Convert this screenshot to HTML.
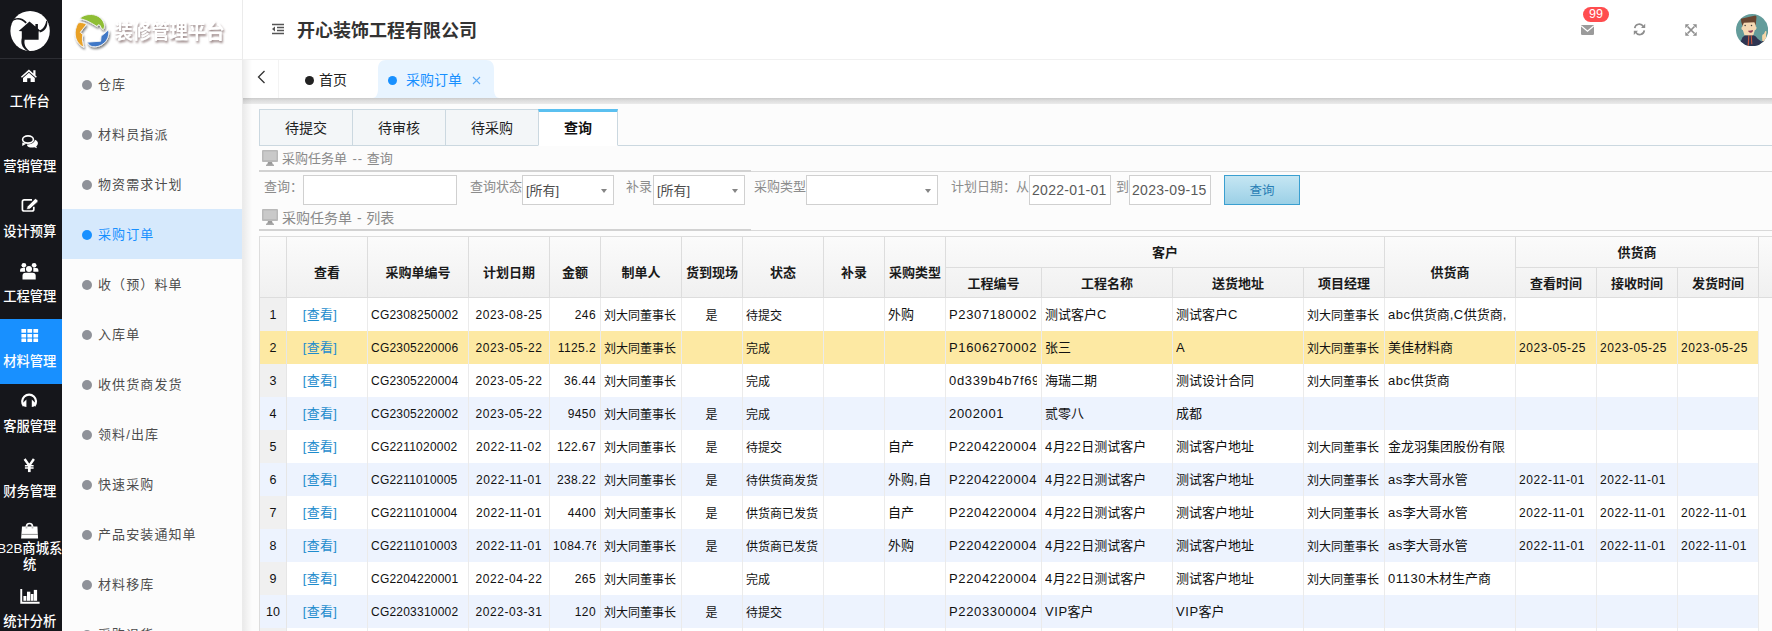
<!DOCTYPE html>
<html lang="zh-CN">
<head>
<meta charset="utf-8">
<title>装修管理平台</title>
<style>
*{box-sizing:border-box;margin:0;padding:0}
html,body{width:1772px;height:631px;overflow:hidden;background:#fff}
body{font-family:"Liberation Sans","Noto Sans CJK SC",sans-serif;font-size:12px;color:#222;position:relative}
.abs{position:absolute}
/* dark rail */
#rail{left:0;top:0;width:62px;height:631px;background:#15161b;color:#fff;overflow:hidden}
#rail .logo{height:59px;border-bottom:1px solid #2c2d33;position:relative}
#rail .it{height:65px;position:relative;text-align:center}
#rail .it.on{background:#1890ff}
#rail .it svg{position:absolute;left:19px;top:7.7px}
#rail .it span{font-weight:500;position:absolute;left:-10px;width:79.5px;top:33px;font-size:13.3px;line-height:20px;white-space:nowrap}
/* second menu */
#menu{left:62px;top:0;width:181px;height:631px;background:#fcfcfc;border-right:1px solid #ebebeb;overflow:hidden}
#menu .brand{height:60px;background:#fff;border-bottom:1px solid #ececec;position:relative}
#menu .mi{height:50px;line-height:52px;padding-left:36px;font-size:13px;letter-spacing:1.1px;color:#4d4d4d;position:relative;white-space:nowrap}
#menu .mi:before{content:"";position:absolute;left:20px;top:20.5px;width:10px;height:10px;border-radius:50%;background:#8f9299}
#menu .mi.on{background:#d6e9fc;color:#1890ff}
#menu .mi.on:before{background:#1890ff}
/* top header */
#top{left:243px;top:0;width:1529px;height:60px;background:#fff;border-bottom:1px solid #f0f0f0}
#top h1{position:absolute;left:54px;top:17.5px;font-size:18px;line-height:26px;font-weight:bold;color:#333;letter-spacing:0}
/* tabbar */
#tabbar{left:243px;top:60px;width:1529px;height:38px;background:#fff}
#tbsh{left:243px;top:98px;width:1529px;height:6px;background:linear-gradient(#cbcbcb,#dcdcdc 40%,#ebebeb)}
#mnsh{left:243px;top:60px;width:9px;height:571px;background:linear-gradient(90deg,rgba(0,0,0,.07),rgba(0,0,0,0))}
#tabbar .t{position:absolute;top:.5px;height:38px;line-height:38px;font-size:14px;color:#222;white-space:nowrap}
#content{left:243px;top:98px;width:1529px;height:533px;background:#fcfcfc}
/* easyui tabs */
#etabs{left:259px;top:109px;width:1513px;height:37px;border-bottom:1px solid #cbd8e0}
#etabs .et{position:absolute;top:0;height:37px;width:94px;border:1px solid #cbd8e0;background:#f3f6f8;text-align:center;line-height:36px;font-size:14px;color:#222}
#etabs .et.on{background:#fff;border-top:3px solid #5bc0f0;border-bottom-color:#fff;font-weight:bold;width:80px;line-height:33px;color:#111}
.sec{left:259px;width:1513px;height:24px;border-bottom:1px solid #d9d9d9;color:#8a8a8a;font-size:13px;line-height:20px;white-space:nowrap}
.sec span{position:absolute;left:23px;top:1px}
.sec:after{content:"";position:absolute;left:0;top:22px;width:492px;height:2px;background:#d2d2d2}
.lbl{color:#8c8c8c;font-size:13px;line-height:18px;white-space:nowrap}
.inp{height:30px;border:1px solid #d0d0d0;background:#fff;font-size:13px;line-height:30px;color:#4a4a4a;padding-left:3px;white-space:nowrap}
.inp i{position:absolute;right:6.5px;top:12.5px;width:0;height:0;border-left:3.5px solid transparent;border-right:3.5px solid transparent;border-top:4px solid #858585}
/* grid */
#grid{left:259px;top:236px;width:1513px;height:395px;overflow:hidden}
#ghead{position:absolute;left:0;top:0;width:1513px;height:62px;border-top:1px solid #ddd;border-bottom:1px solid #ddd;border-left:1px solid #ddd;background:linear-gradient(#fbfbfb,#f0f0f0)}
table{border-collapse:separate;border-spacing:0;table-layout:fixed}
#ht{position:absolute;left:0;top:0;width:1499px}
#ht td{border-right:1px solid #ddd;border-bottom:1px solid #ddd;text-align:center;font-weight:bold;font-size:13px;color:#1a1a1a;height:30px;padding:0;white-space:nowrap;overflow:hidden}
#ht tr.r2 td{height:29px;border-bottom:0}
#ht tr:first-child td{height:31px}
#ht tr:first-child td[rowspan]{border-bottom:0}
#bt{position:absolute;left:1px;top:62px;width:1499px;background:#fff}
#bt td{height:33px;border-right:1px solid #ebebeb;border-bottom:0;padding:0 4px 1px 3px;font-size:12px;white-space:nowrap;overflow:hidden;color:#111}
#bt td div{overflow:hidden;white-space:nowrap}
#bt td.rn{background:#f0f0f0;text-align:center;border-right:1px solid #e6e6e6;padding:0;font-size:12.5px}
#bt tr.alt td{background:#edf3fe}
#bt tr.alt td.rn{background:#edf3fe}
#bt tr.sel td,#bt tr.sel td.rn{background:#fde9a3}
#bt td.lnk{text-align:center;font-size:13px;padding-right:17px}
#bt td.lnk a{color:#1e8ccd;position:relative;top:-1px;letter-spacing:.3px}
#bt td.amt{text-align:right}
#bt td.ctr{text-align:center}
#bt td.big{font-size:13px;padding-bottom:2px}
#bt td.code,#bt td.date,#bt td.amt,#bt td.pc{padding-bottom:0}
#bt td.date{letter-spacing:.55px}
#bt td.code{letter-spacing:.22px}
#bt td.dc{text-align:center;padding:0}
#bt td.big.pc{letter-spacing:.65px}
#bt td i{font-style:normal;letter-spacing:.4px}
#bt td.big i{letter-spacing:.55px}
#bt td.amt{letter-spacing:.4px}
#gleft{position:absolute;left:0;top:62px;width:1px;height:340px;background:#ddd}
</style>
</head>
<body>
<div id="content" class="abs"></div>

<div id="rail" class="abs">
  <div class="logo">
    <svg width="62" height="59" viewBox="0 0 62 59"><ellipse cx="30.100" cy="31" rx="19.700" ry="20" fill="#fff"/>
    <path d="M18.700 30.900 L29.500 21.500 L35.400 26.400 L35.400 24 L37.900 24 L37.900 28.600 L40.200 30.800 L38.600 31.600 L38.600 39.800 L21.800 39.800 L21.800 31.300Z" fill="#15161b"/>
    <path d="M12.300 20 C16 16.800 22.500 17 26.800 22.300 L25.500 23.500 C21.500 18.800 16.500 18.800 12.800 21Z" fill="#15161b"/>
    <path d="M39.300 30.600 C42.800 29.500 45.800 25.500 46.200 20.500 L47.300 21.700 C47.800 27.300 44.300 31.800 39.800 32.400Z" fill="#15161b"/>
    <path d="M21.800 38.500 L24.800 39.500 C23.600 43.500 25.200 48 29.800 51.200 L26.800 50.800 C22 47.500 20.500 43 21.800 38.500Z" fill="#15161b"/>
    </svg>
  </div>
  <div class="it"><svg width="21" height="18" viewBox="0 0 21 18"><path d="M9.900 2.600 L1.900 9.700 L2.900 10.800 L9.900 4.700 L16.900 10.800 L17.900 9.700 L16.500 8.400 L16.500 3.200 L14.300 3.200 L14.300 6.400Z" fill="#fff"/><path d="M9.900 5.800 L4 10.900 L4 15 L8.200 15 L8.200 11.300 L11.600 11.300 L11.600 15 L15.800 15 L15.800 10.900Z" fill="#fff"/></svg><span>工作台</span></div>
  <div class="it"><svg width="21" height="18" viewBox="0 0 21 18"><path d="M9.500 7.500 C13.500 6.500 18.900 7.500 18.900 11 C18.900 12.500 18.200 13.600 17.200 14.300 L18 16.200 L15.300 15.200 C12 16 8.500 15.200 8 13.200Z" fill="#fff"/><ellipse cx="9" cy="7.500" rx="6.900" ry="5" fill="#15161b"/><path d="M3.300 10.500 L3.200 14 L7.200 11.800Z" fill="#fff"/><ellipse cx="9" cy="7.500" rx="5.400" ry="3.600" fill="#15161b" stroke="#fff" stroke-width="1.600"/></svg><span>营销管理</span></div>
  <div class="it"><svg width="21" height="18" viewBox="0 0 21 18"><path d="M13 2.900 H5.200 Q3.400 2.900 3.400 4.700 V12.200 Q3.400 14 5.200 14 H13 Q14.800 14 14.800 12.200 V9.800" fill="none" stroke="#fff" stroke-width="1.700"/><path d="M7.600 12.600 L8.200 9.600 L15.800 2 Q16.600 1.300 17.400 2 L18.700 3.300 Q19.400 4.100 18.700 4.900 L11 12Z" fill="#fff" stroke="#15161b" stroke-width=".7"/></svg><span>设计预算</span></div>
  <div class="it"><svg width="21" height="18" viewBox="0 0 21 18"><circle cx="4.900" cy="3.300" r="2.400" fill="#fff"/><circle cx="15.100" cy="3.300" r="2.400" fill="#fff"/><path d="M1.100 9.800 V8 Q1.100 6 3.200 6 H6.200 V9.800Z M19.400 9.800 V8 Q19.400 6 17.300 6 H14.300 V9.800Z" fill="#fff"/><circle cx="10" cy="7" r="3.900" fill="#15161b"/><circle cx="10" cy="7" r="3" fill="#fff"/><path d="M3 17.600 V13.500 Q3 10.400 6.200 10.400 H13.800 Q17 10.400 17 13.500 V17.600Z" fill="#15161b"/><path d="M3.500 17.600 V13.700 Q3.500 10.700 6.500 10.700 H13.500 Q16.700 10.700 16.700 13.700 V17.600Z" fill="#fff"/></svg><span>工程管理</span></div>
  <div class="it on"><svg width="21" height="18" viewBox="0 0 21 18"><g fill="#fff"><rect x="2.400" y="1.900" width="4.700" height="3.900" rx=".5"/><rect x="8.400" y="1.900" width="4.700" height="3.900" rx=".5"/><rect x="14.400" y="1.900" width="4.700" height="3.900" rx=".5"/><rect x="2.400" y="6.900" width="4.700" height="3.600" rx=".5"/><rect x="8.400" y="6.900" width="4.700" height="3.600" rx=".5"/><rect x="14.400" y="6.900" width="4.700" height="3.600" rx=".5"/><rect x="2.400" y="11.500" width="4.700" height="3.600" rx=".5"/><rect x="8.400" y="11.500" width="4.700" height="3.600" rx=".5"/><rect x="14.400" y="11.500" width="4.700" height="3.600" rx=".5"/></g></svg><span>材料管理</span></div>
  <div class="it"><svg width="21" height="18" viewBox="0 0 21 18"><path d="M4.800 14 A6.900 6.900 0 1 1 15.400 14" fill="none" stroke="#fff" stroke-width="2.200"/><path d="M3.600 11.200 L7.400 7.600 L7.400 15.100 L5.200 14.600Z M16.600 11.200 L12.800 7.600 L12.800 15.100 L15 14.600Z" fill="#fff"/></svg><span>客服管理</span></div>
  <div class="it"><svg width="21" height="18" viewBox="0 0 21 18"><path d="M5.600 2 L10.250 8.700 L14.900 2" fill="none" stroke="#fff" stroke-width="2.400"/><path d="M10.300 8 V15.100" stroke="#fff" stroke-width="2.700"/><path d="M5.900 8.800 H14.600 M5.900 11.100 H14.600" stroke="#fff" stroke-width="1.500"/></svg><span>财务管理</span></div>
  <div class="it"><svg width="21" height="18" viewBox="0 0 21 18"><path d="M7.500 8 V4.700 A3 3.200 0 0 1 13.500 4.700 V8" fill="none" stroke="#fff" stroke-width="1.700"/><path d="M3 4.400 H18.400 L19.100 16.600 H2.100Z" fill="#fff"/><path d="M7.500 4.400 V6.500 M13.500 4.400 V6.500" stroke="#bbb" stroke-width="1.700"/><path d="M2.300 12.400 H18.900" stroke="#777" stroke-width=".8"/></svg><span style="top:26.500px;line-height:16.500px">B2B商城系<br>统</span></div>
  <div class="it"><svg width="22" height="18" viewBox="0 0 22 18"><path d="M2.250 1.900 V15.800 H20.600" fill="none" stroke="#fff" stroke-width="1.900"/><rect x="4.400" y="9" width="3" height="4.800" fill="#fff"/><rect x="8" y="4.700" width="3.300" height="9.100" fill="#fff"/><rect x="11.800" y="7" width="2.700" height="6.800" fill="#fff"/><rect x="14.800" y="2.900" width="3.300" height="10.900" fill="#fff"/></svg><span>统计分析</span></div>
</div>

<div id="menu" class="abs">
  <div class="brand">
    <svg width="181" height="60" viewBox="0 0 181 60" style="position:absolute;left:0;top:0">
      <defs>
        <filter id="sh" x="-20%" y="-30%" width="150%" height="180%"><feGaussianBlur in="SourceAlpha" stdDeviation="1.100"/><feOffset dx="1.200" dy="2.200" result="o"/><feFlood flood-color="#7d6464" flood-opacity=".8"/><feComposite in2="o" operator="in"/><feMerge><feMergeNode/><feMergeNode in="SourceGraphic"/></feMerge></filter>
        <filter id="sh2" x="-20%" y="-20%" width="150%" height="150%"><feGaussianBlur in="SourceAlpha" stdDeviation="1.200"/><feOffset dx=".8" dy="1.800"/><feComponentTransfer><feFuncA type="linear" slope=".5"/></feComponentTransfer><feMerge><feMergeNode/><feMergeNode in="SourceGraphic"/></feMerge></filter>
      </defs>
      <g filter="url(#sh2)">
        <path d="M17.800 18.500 C20.500 15.500 25 14.300 29.500 14.500 C36 14.800 41.500 19 42.500 25.400 C42.600 27 42 28.700 41.200 29.700 L39.100 27.900 L38.100 25.400 L36.200 24.700 L35.200 26.600 L29.500 23.200 L24.900 20.800 L20.300 19.300Z" fill="#8fbe36" stroke="#f6f6f6" stroke-width=".9"/>
        <path d="M24.400 24.400 L18.300 32.300 L20.800 34.600 C20.300 38 20.300 40.500 20.800 42.700 L21.800 47.300 C18 45.500 15.200 42.500 13.800 38 C12.800 34 13 30 14.500 26.500 C15 25 15.800 23.600 16.300 22.900 C19 22 22 22.800 24.400 24.400Z" fill="#e9a127" stroke="#f6f6f6" stroke-width=".9"/>
        <path d="M46.500 29.700 C47.300 33 46.500 37 44.700 40.100 C42 44 37.500 46.600 33.500 46.700 C31.500 46.900 29.500 46.500 27.900 45.700 L24.900 42.200 L38.600 41.200 L39.100 36.100 L43.700 32.500Z" fill="#3f78c7" stroke="#f6f6f6" stroke-width=".9"/>
      </g>
      <text x="52.500" y="39.200" font-family="'Liberation Sans','Noto Sans CJK SC',sans-serif" font-weight="bold" font-size="20" fill="#fff" filter="url(#sh)" textLength="110" lengthAdjust="spacingAndGlyphs">装修管理平台</text>
    </svg>
  </div>
  <div class="mi" style="margin-top:-1px">仓库</div>
  <div class="mi">材料员指派</div>
  <div class="mi">物资需求计划</div>
  <div class="mi on">采购订单</div>
  <div class="mi">收（预）料单</div>
  <div class="mi">入库单</div>
  <div class="mi">收供货商发货</div>
  <div class="mi">领料/出库</div>
  <div class="mi">快速采购</div>
  <div class="mi">产品安装通知单</div>
  <div class="mi">材料移库</div>
  <div class="mi">采购退货</div>
</div>

<div id="top" class="abs">
  <svg class="abs" style="left:28px;top:23px" width="14" height="12" viewBox="0 0 14 12"><path d="M1 1.500 H13 M6 4.500 H13 M6 7.500 H13 M1 10.500 H13" stroke="#555" stroke-width="1.500" fill="none"/><path d="M4 3.600 V8.400 L1 6Z" fill="#555"/></svg>
  <h1>开心装饰工程有限公司</h1>
  <!-- right icons -->
  <svg class="abs" style="left:1338px;top:25px" width="13" height="10" viewBox="0 0 13 10"><rect x="0" y="0" width="13" height="10" rx="1.200" fill="#9b9b9b"/><path d="M0.300 1 L6.500 6.200 L12.700 1" stroke="#fff" stroke-width="1.300" fill="none"/></svg>
  <div class="abs" style="left:1340px;top:7px;width:26px;height:15px;border-radius:8px;background:#ff4d4f;color:#fff;font-size:12.500px;line-height:15px;text-align:center">99</div>
  <svg class="abs" style="left:1390px;top:23px" width="13" height="13" viewBox="0 0 13 13"><path d="M1.700 5.200 A4.600 4.600 0 0 1 10.300 3.600 M11.300 7.400 A4.600 4.600 0 0 1 2.700 9.200" fill="none" stroke="#8e8e8e" stroke-width="1.700"/><path d="M12.200 0.800 V5 H8Z M0.800 12 V7.800 H5Z" fill="#8e8e8e"/></svg>
  <svg class="abs" style="left:1441.500px;top:23.500px" width="12" height="12" viewBox="0 0 12 12"><path d="M2.500 2.500 L9.500 9.500 M9.500 2.500 L2.500 9.500" stroke="#8e8e8e" stroke-width="1.700"/><path d="M0.300 0.300 H4.300 L0.300 4.300Z M11.700 0.300 H7.700 L11.700 4.300Z M0.300 11.700 H4.300 L0.300 7.700Z M11.700 11.700 H7.700 L11.700 7.700Z" fill="#8e8e8e"/></svg>
  <svg class="abs" style="left:1493px;top:13.800px" width="32.200" height="32.200" viewBox="0 0 32 32"><defs><clipPath id="av"><circle cx="16" cy="16" r="16"/></clipPath></defs><circle cx="16" cy="16" r="16" fill="#639c9b"/><g clip-path="url(#av)">
    <path d="M3.500 32 L5 26.500 Q6 22.500 9 21.200 L17.500 21.200 Q20 22 21.500 24.500 L25.500 27.500 L26.500 24.500 L30 27 L27.500 32 Z" fill="#2f3552"/>
    <path d="M12.200 21.200 L11.500 32 L12.800 32 L13.300 21.200Z M14.600 21.200 L15.200 30 L16.300 30 L15.700 21.200Z" fill="#c8583f"/>
    <path d="M26 26.800 L26 21.500 Q26.200 20 27.800 19.800 L29 17.200 Q30.200 16.600 30.300 18 L29.800 21 L30.300 25 Q30 27.500 27.500 27.300Z" fill="#f6d6a8"/>
    <path d="M6.200 7.500 L19.800 7.500 L19.600 12.500 Q20.800 12.600 20.300 14.500 Q19.800 16.200 18.800 16 L17.200 21.200 L8.400 21.200 L6.800 16 Q5.600 16 5.400 14.300 Q5.300 12.800 6.400 12.700Z" fill="#f6d9b3"/>
    <path d="M4.900 4.600 L19.300 1.600 L20.400 2.500 L19.600 11.800 L18.300 8.300 L7.800 8.600 L6.500 12 Q4.800 8 4.900 4.600Z" fill="#6a4631"/>
    <circle cx="9.100" cy="11.500" r=".75" fill="#3a3a3a"/><circle cx="15.400" cy="11.500" r=".75" fill="#3a3a3a"/>
    <path d="M11.800 16.600 Q14.500 16.800 16.900 15.900 Q16.800 18.600 14.600 18.600 Q12.800 18.500 11.800 16.600Z" fill="#8b3b58"/>
  </g></svg>
</div>

<div id="tabbar" class="abs">
  <svg class="abs" style="left:14px;top:10px" width="9" height="14" viewBox="0 0 9 14"><path d="M7.500 1 L1.500 7 L7.500 13" stroke="#333" stroke-width="1.300" fill="none"/></svg>
  <div class="abs" style="left:35px;top:0;width:1px;height:38px;background:#f3f3f3"></div>
  <div class="t" style="left:62px"><i class="abs" style="left:0;top:15px;width:9px;height:9px;border-radius:50%;background:#222"></i><span style="margin-left:14px">首页</span></div>
  <svg class="abs" style="left:129px;top:0" width="128" height="38" viewBox="0 0 128 38"><path d="M0 38 C5 38 6 33 6 29 L6 9 C6 3 9 0 14 0 L114 0 C119 0 122 3 122 9 L122 29 C122 33 123 38 128 38Z" fill="#e8f4ff"/></svg>
  <div class="t" style="left:145px;color:#1890ff"><i class="abs" style="left:0;top:15px;width:9px;height:9px;border-radius:50%;background:#1890ff"></i><span style="margin-left:18px">采购订单</span></div>
  <svg class="abs" style="left:229px;top:16px" width="9" height="9" viewBox="0 0 9 9"><path d="M1 1 L8 8 M8 1 L1 8" stroke="#5aa9f5" stroke-width="1.100"/></svg>
</div>

<div id="tbsh" class="abs"></div><div id="mnsh" class="abs"></div>
<div id="etabs" class="abs">
  <div class="et" style="left:0">待提交</div>
  <div class="et" style="left:93px">待审核</div>
  <div class="et" style="left:186px">待采购</div>
  <div class="et on" style="left:279px">查询</div>
</div>

<div class="sec abs" style="top:148px"><svg class="abs" style="left:3px;top:2px" width="16" height="16" viewBox="0 0 16 16"><rect x="0" y="0" width="16" height="12" rx="1" fill="#b9b9b9"/><rect x="1.500" y="1.500" width="13" height="8.500" fill="#c9c9c9"/><path d="M6 12 L5 15 H11 L10 12Z" fill="#9a9a9a"/><rect x="4" y="14.500" width="8" height="1.500" fill="#aaa"/></svg><span>采购任务单<b style="font-weight:normal;letter-spacing:1px;margin:0 3.500px 0 5.500px">--</b>查询</span></div>

<div class="abs lbl" style="left:264px;top:178px">查询：</div>
<div class="abs inp" style="left:303px;top:175px;width:154px"></div>
<div class="abs lbl" style="left:470px;top:178px">查询状态</div>
<div class="abs inp" style="left:522px;top:175px;width:92px">[所有]<i></i></div>
<div class="abs lbl" style="left:626px;top:178px">补录</div>
<div class="abs inp" style="left:653px;top:175px;width:92px">[所有]<i></i></div>
<div class="abs lbl" style="left:754px;top:178px">采购类型</div>
<div class="abs inp" style="left:806px;top:175px;width:132px"><i></i></div>
<div class="abs lbl" style="left:951px;top:178px">计划日期：从</div>
<div class="abs inp" style="left:1029px;top:175px;width:82px;font-size:14px;letter-spacing:.3px;line-height:28px;color:#5a5a5a;padding-left:2px">2022-01-01</div>
<div class="abs lbl" style="left:1116px;top:178px">到</div>
<div class="abs inp" style="left:1129px;top:175px;width:82px;font-size:14px;letter-spacing:.3px;line-height:28px;color:#5a5a5a;padding-left:2px">2023-09-15</div>
<div class="abs" style="left:1224px;top:175px;width:76px;height:30px;border:1px solid #3a9fd0;background:linear-gradient(#c5e6f3,#9bd0e6);color:#2a7fb5;font-size:12.5px;text-align:center;line-height:30px">查询</div>

<div class="sec abs" style="top:207px"><svg class="abs" style="left:3px;top:2px" width="16" height="16" viewBox="0 0 16 16"><rect x="0" y="0" width="16" height="12" rx="1" fill="#b9b9b9"/><rect x="1.500" y="1.500" width="13" height="8.500" fill="#c9c9c9"/><path d="M6 12 L5 15 H11 L10 12Z" fill="#9a9a9a"/><rect x="4" y="14.500" width="8" height="1.500" fill="#aaa"/></svg><span style="font-size:14px">采购任务单<b style="font-weight:normal;margin:0 4.500px 0 5px">-</b>列表</span></div>

<div id="grid" class="abs">
  <div id="ghead">
  <table id="ht">
    <colgroup><col style="width:27px"><col style="width:81px"><col style="width:101px"><col style="width:81px"><col style="width:51px"><col style="width:81px"><col style="width:61px"><col style="width:81px"><col style="width:61px"><col style="width:61px"><col style="width:96px"><col style="width:131px"><col style="width:131px"><col style="width:81px"><col style="width:131px"><col style="width:81px"><col style="width:81px"><col style="width:81px"></colgroup>
    <tr><td rowspan="2"></td><td rowspan="2" style="padding-top:9px">查看</td><td rowspan="2" style="padding-top:9px">采购单编号</td><td rowspan="2" style="padding-top:9px">计划日期</td><td rowspan="2" style="padding-top:9px">金额</td><td rowspan="2" style="padding-top:9px">制单人</td><td rowspan="2" style="padding-top:9px">货到现场</td><td rowspan="2" style="padding-top:9px">状态</td><td rowspan="2" style="padding-top:9px">补录</td><td rowspan="2" style="padding-top:9px">采购类型</td><td colspan="4" style="padding-bottom:2px">客户</td><td rowspan="2" style="padding-top:9px">供货商</td><td colspan="3" style="padding-bottom:2px">供货商</td></tr>
    <tr class="r2"><td>工程编号</td><td>工程名称</td><td>送货地址</td><td>项目经理</td><td>查看时间</td><td>接收时间</td><td>发货时间</td></tr>
  </table>
  </div>
  <div id="gleft"></div>
  <table id="bt">
    <colgroup><col style="width:27px"><col style="width:81px"><col style="width:101px"><col style="width:81px"><col style="width:51px"><col style="width:81px"><col style="width:61px"><col style="width:81px"><col style="width:61px"><col style="width:61px"><col style="width:96px"><col style="width:131px"><col style="width:131px"><col style="width:81px"><col style="width:131px"><col style="width:81px"><col style="width:81px"><col style="width:81px"></colgroup>
<tr class=""><td class="rn">1</td><td class="lnk"><a>[查看]</a></td><td class="code"><div>CG2308250002</div></td><td class="date dc"><div>2023-08-25</div></td><td class="amt"><div>246</div></td><td class="cn"><div>刘大同董事长</div></td><td class="ctr"><div>是</div></td><td class="cn"><div>待提交</div></td><td class="cn"><div></div></td><td class="big"><div>外购</div></td><td class="big pc"><div>P2307180002</div></td><td class="big"><div>测试客户<i>C</i></div></td><td class="big"><div>测试客户<i>C</i></div></td><td class="cn"><div>刘大同董事长</div></td><td class="big"><div><i>abc</i>供货商<i>,C</i>供货商<i>,</i></div></td><td class="date"><div></div></td><td class="date"><div></div></td><td class="date"><div></div></td></tr>
<tr class="sel"><td class="rn">2</td><td class="lnk"><a>[查看]</a></td><td class="code"><div>CG2305220006</div></td><td class="date dc"><div>2023-05-22</div></td><td class="amt"><div>1125.2</div></td><td class="cn"><div>刘大同董事长</div></td><td class="ctr"><div></div></td><td class="cn"><div>完成</div></td><td class="cn"><div></div></td><td class="big"><div></div></td><td class="big pc"><div>P1606270002</div></td><td class="big"><div>张三</div></td><td class="big pc"><div>A</div></td><td class="cn"><div>刘大同董事长</div></td><td class="big"><div>美佳材料商</div></td><td class="date"><div>2023-05-25</div></td><td class="date"><div>2023-05-25</div></td><td class="date"><div>2023-05-25</div></td></tr>
<tr class=""><td class="rn">3</td><td class="lnk"><a>[查看]</a></td><td class="code"><div>CG2305220004</div></td><td class="date dc"><div>2023-05-22</div></td><td class="amt"><div>36.44</div></td><td class="cn"><div>刘大同董事长</div></td><td class="ctr"><div></div></td><td class="cn"><div>完成</div></td><td class="cn"><div></div></td><td class="big"><div></div></td><td class="big pc"><div>0d339b4b7f69</div></td><td class="big"><div>海瑞二期</div></td><td class="big"><div>测试设计合同</div></td><td class="cn"><div>刘大同董事长</div></td><td class="big"><div><i>abc</i>供货商</div></td><td class="date"><div></div></td><td class="date"><div></div></td><td class="date"><div></div></td></tr>
<tr class="alt"><td class="rn">4</td><td class="lnk"><a>[查看]</a></td><td class="code"><div>CG2305220002</div></td><td class="date dc"><div>2023-05-22</div></td><td class="amt"><div>9450</div></td><td class="cn"><div>刘大同董事长</div></td><td class="ctr"><div>是</div></td><td class="cn"><div>完成</div></td><td class="cn"><div></div></td><td class="big"><div></div></td><td class="big pc"><div>2002001</div></td><td class="big"><div>贰零八</div></td><td class="big"><div>成都</div></td><td class="cn"><div></div></td><td class="big"><div></div></td><td class="date"><div></div></td><td class="date"><div></div></td><td class="date"><div></div></td></tr>
<tr class=""><td class="rn">5</td><td class="lnk"><a>[查看]</a></td><td class="code"><div>CG2211020002</div></td><td class="date dc"><div>2022-11-02</div></td><td class="amt"><div>122.67</div></td><td class="cn"><div>刘大同董事长</div></td><td class="ctr"><div>是</div></td><td class="cn"><div>待提交</div></td><td class="cn"><div></div></td><td class="big"><div>自产</div></td><td class="big pc"><div>P2204220004</div></td><td class="big"><div><i>4</i>月<i>22</i>日测试客户</div></td><td class="big"><div>测试客户地址</div></td><td class="cn"><div>刘大同董事长</div></td><td class="big"><div>金龙羽集团股份有限</div></td><td class="date"><div></div></td><td class="date"><div></div></td><td class="date"><div></div></td></tr>
<tr class="alt"><td class="rn">6</td><td class="lnk"><a>[查看]</a></td><td class="code"><div>CG2211010005</div></td><td class="date dc"><div>2022-11-01</div></td><td class="amt"><div>238.22</div></td><td class="cn"><div>刘大同董事长</div></td><td class="ctr"><div>是</div></td><td class="cn"><div>待供货商发货</div></td><td class="cn"><div></div></td><td class="big"><div>外购<i>,</i>自</div></td><td class="big pc"><div>P2204220004</div></td><td class="big"><div><i>4</i>月<i>22</i>日测试客户</div></td><td class="big"><div>测试客户地址</div></td><td class="cn"><div>刘大同董事长</div></td><td class="big"><div><i>as</i>李大哥水管</div></td><td class="date"><div>2022-11-01</div></td><td class="date"><div>2022-11-01</div></td><td class="date"><div></div></td></tr>
<tr class=""><td class="rn">7</td><td class="lnk"><a>[查看]</a></td><td class="code"><div>CG2211010004</div></td><td class="date dc"><div>2022-11-01</div></td><td class="amt"><div>4400</div></td><td class="cn"><div>刘大同董事长</div></td><td class="ctr"><div>是</div></td><td class="cn"><div>供货商已发货</div></td><td class="cn"><div></div></td><td class="big"><div>自产</div></td><td class="big pc"><div>P2204220004</div></td><td class="big"><div><i>4</i>月<i>22</i>日测试客户</div></td><td class="big"><div>测试客户地址</div></td><td class="cn"><div>刘大同董事长</div></td><td class="big"><div><i>as</i>李大哥水管</div></td><td class="date"><div>2022-11-01</div></td><td class="date"><div>2022-11-01</div></td><td class="date"><div>2022-11-01</div></td></tr>
<tr class="alt"><td class="rn">8</td><td class="lnk"><a>[查看]</a></td><td class="code"><div>CG2211010003</div></td><td class="date dc"><div>2022-11-01</div></td><td class="amt"><div>1084.76</div></td><td class="cn"><div>刘大同董事长</div></td><td class="ctr"><div>是</div></td><td class="cn"><div>供货商已发货</div></td><td class="cn"><div></div></td><td class="big"><div>外购</div></td><td class="big pc"><div>P2204220004</div></td><td class="big"><div><i>4</i>月<i>22</i>日测试客户</div></td><td class="big"><div>测试客户地址</div></td><td class="cn"><div>刘大同董事长</div></td><td class="big"><div><i>as</i>李大哥水管</div></td><td class="date"><div>2022-11-01</div></td><td class="date"><div>2022-11-01</div></td><td class="date"><div>2022-11-01</div></td></tr>
<tr class=""><td class="rn">9</td><td class="lnk"><a>[查看]</a></td><td class="code"><div>CG2204220001</div></td><td class="date dc"><div>2022-04-22</div></td><td class="amt"><div>265</div></td><td class="cn"><div>刘大同董事长</div></td><td class="ctr"><div></div></td><td class="cn"><div>完成</div></td><td class="cn"><div></div></td><td class="big"><div></div></td><td class="big pc"><div>P2204220004</div></td><td class="big"><div><i>4</i>月<i>22</i>日测试客户</div></td><td class="big"><div>测试客户地址</div></td><td class="cn"><div>刘大同董事长</div></td><td class="big"><div><i>01130</i>木材生产商</div></td><td class="date"><div></div></td><td class="date"><div></div></td><td class="date"><div></div></td></tr>
<tr class="alt"><td class="rn">10</td><td class="lnk"><a>[查看]</a></td><td class="code"><div>CG2203310002</div></td><td class="date dc"><div>2022-03-31</div></td><td class="amt"><div>120</div></td><td class="cn"><div>刘大同董事长</div></td><td class="ctr"><div>是</div></td><td class="cn"><div>待提交</div></td><td class="cn"><div></div></td><td class="big"><div></div></td><td class="big pc"><div>P2203300004</div></td><td class="big"><div><i>VIP</i>客户</div></td><td class="big"><div><i>VIP</i>客户</div></td><td class="cn"><div></div></td><td class="big"><div></div></td><td class="date"><div></div></td><td class="date"><div></div></td><td class="date"><div></div></td></tr>
<tr class=""><td class="rn"></td><td></td><td></td><td></td><td></td><td></td><td></td><td></td><td></td><td></td><td></td><td></td><td></td><td></td><td></td><td></td><td></td><td></td></tr>
  </table>
</div>
</body>
</html>
